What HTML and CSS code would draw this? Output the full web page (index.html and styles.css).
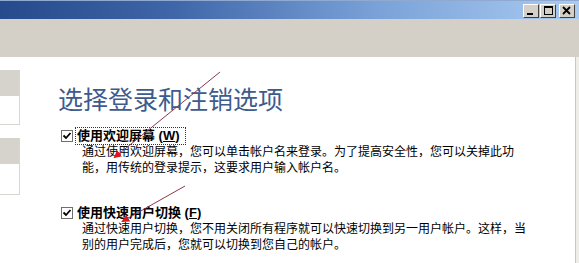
FILE: index.html
```html
<!DOCTYPE html>
<html lang="zh-CN">
<head>
<meta charset="utf-8">
<link rel="stylesheet" href="styles.css">
</head>
<body>
<div class="window">
  <div class="titlebar">
    <div class="tb-buttons">
      <span class="tb-btn"><svg width="10" height="10" viewBox="0 0 10 10"><rect x="1" y="7" width="6" height="2" fill="#000"/></svg></span>
      <span class="tb-btn"><svg width="10" height="10" viewBox="0 0 10 10"><rect x="1.5" y="0.5" width="8" height="8" fill="none" stroke="#000"/><rect x="1" y="0" width="9" height="2" fill="#000"/></svg></span>
      <span class="tb-btn close"><svg width="10" height="10" viewBox="0 0 10 10"><path d="M1 1 L8 8 M8 1 L1 8" stroke="#000" stroke-width="1.8"/></svg></span>
    </div>
  </div>
  <div class="toolbar"></div>
  <div class="main">
    <div class="sidebar">
      <div class="side-card"><div class="side-head"></div><div class="side-body"></div></div>
      <div class="side-card second"><div class="side-head"></div><div class="side-body tall"></div></div>
    </div>
    <div class="content">
      <h1 class="title">选择登录和注销选项</h1>
      <div class="option">
        <div class="opt-row">
          <svg class="check" width="12" height="12" viewBox="0 0 12 12"><rect x="0.5" y="0.5" width="11" height="11" fill="#fff" stroke="#6f6f6f"/><path d="M2.5 5.5 L5 8 L9.5 3" fill="none" stroke="#000" stroke-width="1.8"/></svg>
          <span class="opt-label focus">使用欢迎屏幕 (<u>W</u>)</span>
        </div>
        <p class="opt-desc">通过使用欢迎屏幕，您可以单击帐户名来登录。为了提高安全性，您可以关掉此功<br>能，用传统的登录提示，这要求用户输入帐户名。</p>
      </div>
      <div class="option second">
        <div class="opt-row">
          <svg class="check" width="12" height="12" viewBox="0 0 12 12"><rect x="0.5" y="0.5" width="11" height="11" fill="#fff" stroke="#6f6f6f"/><path d="M2.5 5.5 L5 8 L9.5 3" fill="none" stroke="#000" stroke-width="1.8"/></svg>
          <span class="opt-label">使用快速用户切换 (<u>F</u>)</span>
        </div>
        <p class="opt-desc">通过快速用户切换，您不用关闭所有程序就可以快速切换到另一用户帐户。这样，当<br>别的用户完成后，您就可以切换到您自己的帐户。</p>
      </div>
    </div>
    <div class="edge"></div>
  </div>
  <svg class="arrows" width="579" height="263" viewBox="0 0 579 263">
    <defs>
      <marker id="head" markerWidth="8" markerHeight="8" refX="6" refY="4" orient="auto" markerUnits="userSpaceOnUse">
        <path d="M0 0 L8 4 L0 8 Z" fill="#e0141c"/>
      </marker>
    </defs>
    <line x1="220" y1="72" x2="115" y2="157" stroke="#8a3a4c" stroke-width="1" marker-end="url(#head)"/>
    <line x1="185" y1="186" x2="123" y2="221" stroke="#8a3a4c" stroke-width="1" marker-end="url(#head)"/>
  </svg>
</div>
</body>
</html>
```

FILE: styles.css
```css
html, body {
  margin: 0;
  padding: 0;
  width: 579px;
  height: 263px;
  overflow: hidden;
  background: #fff;
}
.window {
  position: relative;
  width: 579px;
  height: 263px;
  display: flex;
  flex-direction: column;
  font-family: "Liberation Sans", "Noto Sans CJK SC", sans-serif;
}
.titlebar {
  height: 19px;
  flex: none;
  background: linear-gradient(to right, #264a8c 0%, #3f66a8 30%, #7aa2d8 65%, #a9cbf2 100%);
  border-top: 1px solid #8fa9d0;
  box-sizing: border-box;
  display: flex;
  justify-content: flex-end;
  align-items: flex-start;
  padding: 3px 4px 0 0;
}
.tb-buttons {
  display: flex;
  gap: 1px;
}
.tb-btn {
  width: 16px;
  height: 14px;
  box-sizing: border-box;
  background: #d4d0c8;
  border-top: 1px solid #fff;
  border-left: 1px solid #fff;
  border-right: 1px solid #404040;
  border-bottom: 1px solid #404040;
  display: flex;
  align-items: center;
  justify-content: center;
}
.tb-btn.close {
  margin-left: 2px;
}
.toolbar {
  height: 38px;
  flex: none;
  background: #d4d0c8;
}
.main {
  flex: 1;
  display: flex;
  background: #fff;
}
.sidebar {
  width: 20px;
  flex: none;
  padding-top: 13px;
  display: flex;
  flex-direction: column;
  gap: 13px;
}
.side-card {
  border-right: 1px solid #d8d6d0;
  border-bottom: 1px solid #d8d6d0;
}
.side-head {
  height: 26px;
  background: #d6d3cc;
}
.side-body {
  height: 28px;
  background: #fff;
}
.side-body.tall {
  height: 30px;
}
.content {
  flex: 1;
  padding: 26px 0 0 38px;
}
.title {
  margin: 0;
  font-family: "Noto Sans CJK SC", sans-serif;
  font-size: 25px;
  line-height: 30px;
  font-weight: 400;
  color: #3e5b8e;
}
.option {
  margin-top: 15px;
}
.option.second {
  margin-top: 29px;
}
.opt-row {
  display: flex;
  align-items: center;
  height: 16px;
  padding-left: 3px;
}
.check {
  flex: none;
  margin-right: 4px;
}
.opt-label {
  font-size: 13px;
  font-weight: 700;
  line-height: 14px;
  color: #000;
}
.opt-label.focus {
  outline: 1px dotted #333;
  outline-offset: 1px;
  padding-right: 4px;
}
.opt-desc {
  margin: 0;
  padding-left: 24px;
  font-size: 12px;
  line-height: 16px;
  color: #000;
  white-space: nowrap;
}
.edge {
  width: 3px;
  flex: none;
  border-left: 1px solid #c9c7c2;
  background: #efede8;
}
.arrows {
  position: absolute;
  left: 0;
  top: 0;
  pointer-events: none;
}
```
